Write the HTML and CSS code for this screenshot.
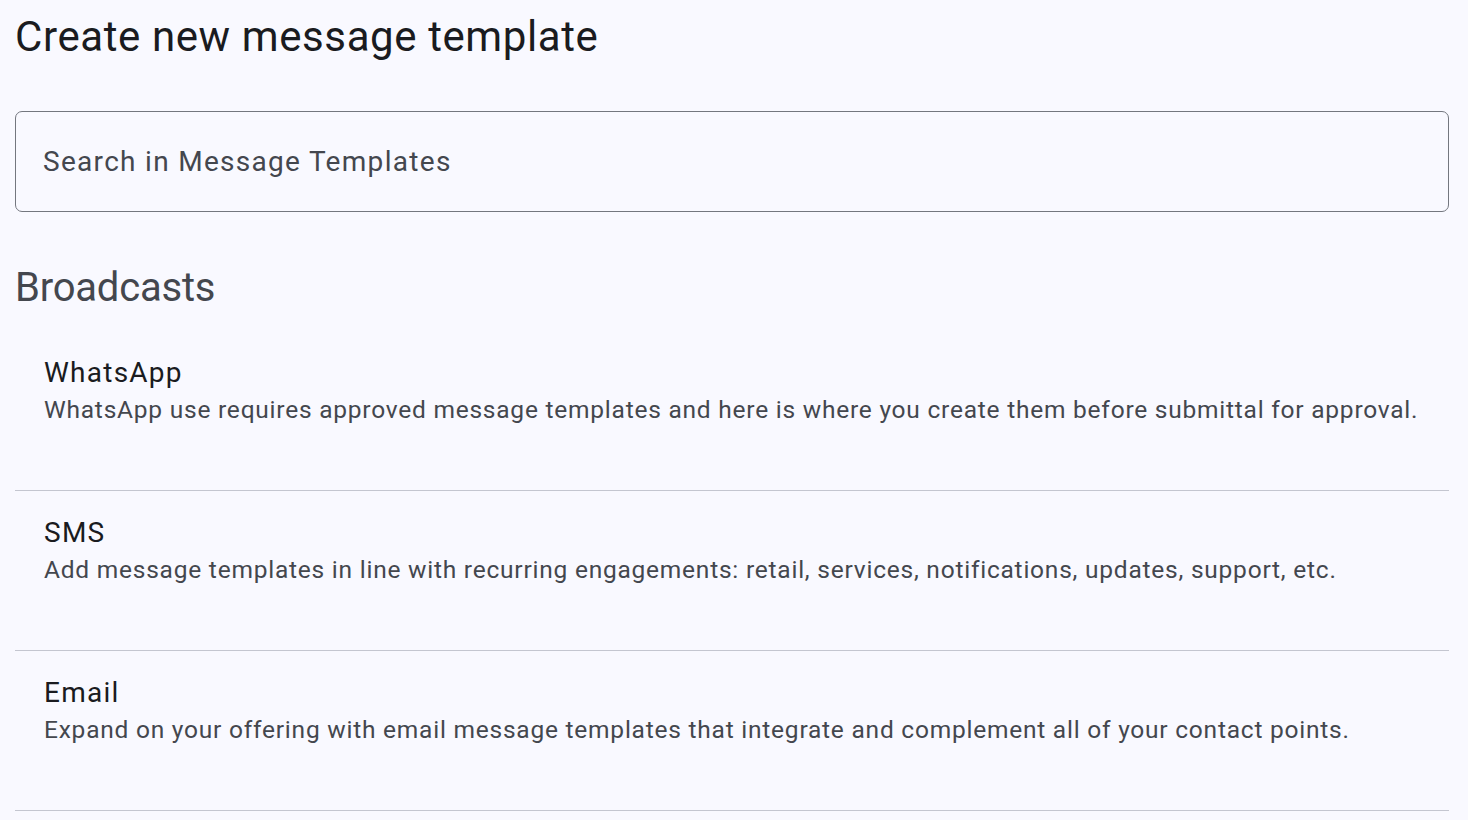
FILE: index.html
```html
<!DOCTYPE html>
<html lang="en">
<head>
  <meta charset="UTF-8" />
  <title>Create new message template</title>
  <meta name="viewport" content="width=device-width, initial-scale=1" />
  <link rel="stylesheet" href="styles.css">
</head>
<body>

  <main class="page">
    <h1 class="page-title">Create new message template</h1>

    <div class="search">
      <input type="text" class="search-input" placeholder="Search in Message Templates" />
    </div>

    <h2 class="section-title">Broadcasts</h2>

    <ul class="channel-list">
      <li class="channel">
        <div class="channel-name">WhatsApp</div>
        <div class="channel-desc">WhatsApp use requires approved message templates and here is where you create them before submittal for approval.</div>
      </li>
      <li class="channel">
        <div class="channel-name">SMS</div>
        <div class="channel-desc">Add message templates in line with recurring engagements: retail, services, notifications, updates, support, etc.</div>
      </li>
      <li class="channel">
        <div class="channel-name">Email</div>
        <div class="channel-desc">Expand on your offering with email message templates that integrate and complement all of your contact points.</div>
      </li>
    </ul>
  </main>

</body>
</html>
```

FILE: styles.css
```css
* {
  box-sizing: border-box;
  margin: 0;
  padding: 0;
}

body {
  font-family: Roboto, 'Noto Sans', sans-serif;
  background: #f9f9ff;
  color: #1a1b20;
  padding: 0 19px 0 15px;
  overflow: hidden;
}

.page {
  display: flex;
  flex-direction: column;
}

.page-title {
  font-size: 42px;
  line-height: 50px;
  font-weight: 400;
  letter-spacing: 0.6px;
  color: #1a1b20;
  margin-top: 12px;
}

.search {
  margin-top: 49px;
}

.search-input {
  width: 100%;
  height: 101px;
  padding: 0 27px;
  border: 1px solid #74777f;
  border-radius: 7px;
  background: transparent;
  font-family: inherit;
  font-size: 28px;
  letter-spacing: 1.3px;
  color: #1a1b20;
  outline: none;
}

.search-input::placeholder {
  color: #44474e;
}

.section-title {
  font-size: 40px;
  line-height: 48px;
  font-weight: 400;
  letter-spacing: -0.2px;
  color: #44474e;
  margin-top: 52px;
}

.channel-list {
  list-style: none;
  margin-top: 19px;
}

.channel {
  padding: 24px 0 61px 29px;
  border-bottom: 1px solid #c4c6d0;
}

.channel-name {
  font-size: 28px;
  line-height: 36px;
  letter-spacing: 1.25px;
  color: #1a1b20;
}

.channel-desc {
  font-size: 24.5px;
  line-height: 38px;
  letter-spacing: 0.77px;
  color: #44474e;
  white-space: nowrap;
}
```
